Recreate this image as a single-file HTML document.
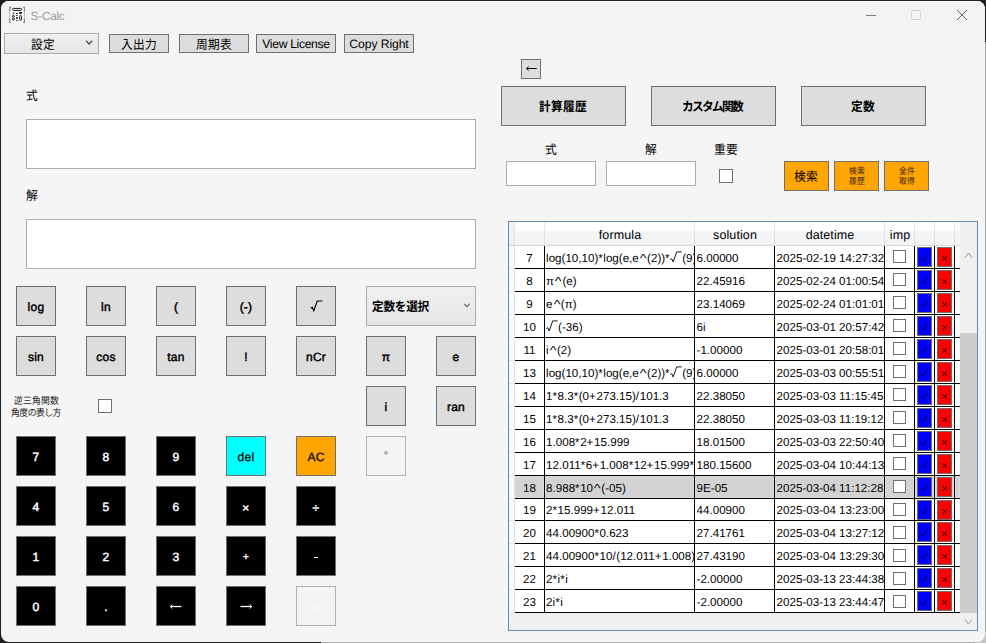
<!DOCTYPE html><html><head><meta charset="utf-8"><title>S-Calc</title><style>
*{box-sizing:border-box}
html,body{margin:0;padding:0}
body{text-rendering:geometricPrecision;width:986px;height:643px;position:relative;overflow:hidden;background:#1f1f1f;font-family:"Liberation Sans",sans-serif;font-size:12px;color:#000}
.a{position:absolute}
.t{position:absolute;overflow:visible}
.t text{font-family:"Liberation Sans","Noto Sans CJK JP",sans-serif}
#win{position:absolute;left:1px;top:1px;width:984px;height:641px;background:#f5f5f5;border-radius:8px 8px 8px 8px;overflow:hidden}
#tb{position:absolute;left:0;top:0;width:984px;height:29px;background:#f3f3f3;border-top:1px solid #fbfbfb}
.b{position:absolute;background:#ddd;border:1px solid #707070;text-align:center;font-weight:bold;font-size:12px;white-space:nowrap}
.k{position:absolute;width:40px;height:40px;line-height:41px;background:#ddd;border:1px solid #707070;text-align:center;font-weight:normal;-webkit-text-stroke:.45px currentColor;letter-spacing:.25px;font-size:12px}
.k.bk{background:#000;color:#fff}
.k.dis{background:#f4f4f4;border-color:#adb2b5;color:#838383}
.tx{position:absolute;background:#fff;border:1px solid #abadb3}
.cb{position:absolute;background:#fff;border:1px solid #707070}
.or{position:absolute;background:#ffa500;border:1px solid #707070}
</style></head><body>
<div class="a" style="left:985px;top:42px;width:1px;height:601px;background:#a8a8a8"></div>
<div class="a" style="left:321px;top:642px;width:665px;height:1px;background:#ababab"></div>
<div class="a" style="left:975px;top:632px;width:11px;height:11px;background:#c4c4c4"></div>
<div id="win">
<div id="tb"></div>
</div>
<svg class="t" style="left:6px;top:4px" width="24" height="22" viewBox="0 0 24 22">
<rect x="5" y="2.7" width="12.6" height="16.6" fill="#fcfcfc"/>
<path d="M3.7 6v9.8M18.4 6v9.8" fill="none" stroke="#b4b8bd" stroke-width="1.1"/>
<path d="M5 3.4H3.7V7M3.7 15v3.5H5M17.1 3.4h1.3V7M18.4 15v3.5h-1.3" fill="none" stroke="#7c838b" stroke-width="1.1"/>
<rect x="6.5" y="4.4" width="9.1" height="2" rx=".9" fill="#fff" stroke="#0b0f14" stroke-width="1"/>
<g fill="#0b0f14"><path d="M6.1 9.8h2V8.1z"/><rect x="9.9" y="9" width="2.1" height=".85"/><rect x="13.2" y="8.05" width="2.7" height="1.75"/>
<rect x="9.9" y="11" width="2.1" height=".65"/><rect x="10.1" y="13" width="1.8" height="1.7"/><rect x="9.9" y="16.1" width="2.1" height=".7"/></g>
<g fill="none" stroke="#0b0f14" stroke-width=".95"><circle cx="7.4" cy="12.3" r=".95"/><circle cx="7.4" cy="15.1" r="1.1"/><rect x="13.7" y="11.5" width="1.8" height="4.8" rx=".8" fill="#fff"/></g>
</svg>
<div class="a" style="left:30.6px;top:9px;font-size:11.8px;line-height:14px;color:#9a9a9a;letter-spacing:-0.25px">S-Calc</div>
<svg class="t" style="left:860px;top:5px" width="120" height="20" viewBox="0 0 120 20"><path d="M6 10.5h10" stroke="#7a7a7a" stroke-width="1" fill="none"/><rect x="51.5" y="5.5" width="9" height="9" rx="1" fill="none" stroke="#d0d0d0" stroke-width="1"/><path d="M97 5l10 10M107 5l-10 10" stroke="#666" stroke-width="1" fill="none"/></svg>
<div class="a" style="left:4px;top:33px;width:95px;height:21px;border:1px solid #acacac;background:linear-gradient(#f0f0f0,#e5e5e5)"></div>
<svg class="t" style="left:31.00px;top:37.80px" width="25.00" height="14.98" preserveAspectRatio="none" viewBox="0 0 2083 1200"><text x="0" y="880" font-size="1000" fill="#000">設定</text></svg>
<svg class="t" style="left:84px;top:39px" width="10" height="8" viewBox="0 0 10 8"><path d="M2 1.8l3.1 3.2 3.1-3.2" fill="none" stroke="#505050" stroke-width="1.3"/></svg>
<div class="b" style="left:109px;top:34px;width:60px;height:19px"></div>
<svg class="t" style="left:121.00px;top:37.80px" width="37.00" height="14.98" preserveAspectRatio="none" viewBox="0 0 3083 1200"><text x="0" y="880" font-size="1000" fill="#000">入出力</text></svg>
<div class="b" style="left:179px;top:34px;width:70px;height:19px"></div>
<svg class="t" style="left:196.00px;top:37.80px" width="37.00" height="14.98" preserveAspectRatio="none" viewBox="0 0 3083 1200"><text x="0" y="880" font-size="1000" fill="#000">周期表</text></svg>
<div class="b" style="left:256px;top:34px;width:80px;height:19px;font-weight:normal;line-height:18px;font-size:12.2px;letter-spacing:-0.35px">View License</div>
<div class="b" style="left:344px;top:34px;width:70px;height:19px;font-weight:normal;line-height:18px;font-size:12.2px;letter-spacing:-0.1px">Copy Right</div>
<svg class="t" style="left:26.10px;top:88.60px" width="13.00" height="14.98" preserveAspectRatio="none" viewBox="0 0 1083 1200"><text x="0" y="880" font-size="1000" fill="#000">式</text></svg>
<svg class="t" style="left:26.10px;top:188.60px" width="13.00" height="14.98" preserveAspectRatio="none" viewBox="0 0 1083 1200"><text x="0" y="880" font-size="1000" fill="#000">解</text></svg>
<div class="tx" style="left:26px;top:119px;width:450px;height:50px"></div>
<div class="tx" style="left:26px;top:219px;width:450px;height:50px"></div>
<div class="k " style="left:16px;top:286px;">log</div>
<div class="k " style="left:86px;top:286px;">ln</div>
<div class="k " style="left:156px;top:286px;">(</div>
<div class="k " style="left:226px;top:286px;">(-)</div>
<div class="k " style="left:296px;top:286px;"><svg width="13" height="13" viewBox="0 0 13 13" style="vertical-align:-2px"><path d="M0.6 8.3l1.7-.9 1.5 3.4L7.2 1h5.3" fill="none" stroke="#000" stroke-width="1.15"/></svg></div>
<div class="k " style="left:16px;top:336px;">sin</div>
<div class="k " style="left:86px;top:336px;">cos</div>
<div class="k " style="left:156px;top:336px;">tan</div>
<div class="k " style="left:226px;top:336px;">!</div>
<div class="k " style="left:296px;top:336px;">nCr</div>
<div class="k " style="left:366px;top:336px;">&#960;</div>
<div class="k " style="left:436px;top:336px;">e</div>
<div class="k " style="left:366px;top:386px;">i</div>
<div class="k " style="left:436px;top:386px;">ran</div>
<div class="k bk" style="left:16px;top:436px;">7</div>
<div class="k bk" style="left:86px;top:436px;">8</div>
<div class="k bk" style="left:156px;top:436px;">9</div>
<div class="k " style="left:226px;top:436px;background:#00ffff;-webkit-text-stroke-width:.25px">del</div>
<div class="k " style="left:296px;top:436px;background:#ffa500;-webkit-text-stroke-width:.25px">AC</div>
<div class="k dis" style="left:366px;top:436px;-webkit-text-stroke-width:.2px;line-height:39px;font-size:11px">&#176;</div>
<div class="k bk" style="left:16px;top:486px;">4</div>
<div class="k bk" style="left:86px;top:486px;">5</div>
<div class="k bk" style="left:156px;top:486px;">6</div>
<div class="k bk" style="left:226px;top:486px;line-height:43px">&#215;</div>
<div class="k bk" style="left:296px;top:486px;line-height:43px">&#247;</div>
<div class="k bk" style="left:16px;top:536px;">1</div>
<div class="k bk" style="left:86px;top:536px;">2</div>
<div class="k bk" style="left:156px;top:536px;">3</div>
<div class="k bk" style="left:226px;top:536px;line-height:41px;font-size:10px">+</div>
<div class="k bk" style="left:296px;top:536px;line-height:41px"><span style="display:inline-block;width:4px;height:1.3px;background:#fff;vertical-align:3px"></span></div>
<div class="k bk" style="left:16px;top:586px;">0</div>
<div class="k bk" style="left:86px;top:586px;">.</div>
<div class="k bk" style="left:156px;top:586px;"></div>
<div class="k bk" style="left:226px;top:586px;"></div>
<svg class="t" style="left:169.4px;top:602px" width="14" height="9" viewBox="0 0 14 9"><path d="M1.2 4.5h11.3" fill="none" stroke="#fff" stroke-width="1.3"/><path d="M3.4 2.5L1.3 4.5l2.1 2" fill="none" stroke="#fff" stroke-width="1"/></svg>
<svg class="t" style="left:239.4px;top:602px" width="14" height="9" viewBox="0 0 14 9"><path d="M1.5 4.5h11.3" fill="none" stroke="#fff" stroke-width="1.3"/><path d="M10.6 2.5l2.1 2-2.1 2" fill="none" stroke="#fff" stroke-width="1"/></svg>
<div class="k dis" style="left:296px;top:586px;color:#fbfbfb;line-height:43px">=</div>
<div class="a" style="left:366px;top:286px;width:110px;height:40px;border:1px solid #acacac;background:linear-gradient(#f0f0f0,#e5e5e5)"></div>
<svg class="t" style="left:372.30px;top:299.80px" width="58.48" height="14.98" preserveAspectRatio="none" viewBox="0 0 4873 1200"><text x="0" y="880" font-size="1000" font-weight="bold" fill="#000" textLength="4800" lengthAdjust="spacing">定数を選択</text></svg>
<svg class="t" style="left:462px;top:302px" width="10" height="8" viewBox="0 0 10 8"><path d="M2.2 1.8l2.7 2.8 2.7-2.8" fill="none" stroke="#606060" stroke-width="1.1"/></svg>
<svg class="t" style="left:13.70px;top:395.50px" width="46.00" height="11.23" preserveAspectRatio="none" viewBox="0 0 5111 1200"><text x="0" y="880" font-size="1000" fill="#222">逆三角関数</text></svg>
<svg class="t" style="left:11.09px;top:407.50px" width="51.22" height="11.23" preserveAspectRatio="none" viewBox="0 0 5691 1200"><text x="0" y="880" font-size="1000" fill="#222" textLength="5620" lengthAdjust="spacing">角度の表し方</text></svg>
<div class="cb" style="left:98px;top:399px;width:14px;height:14px"></div>
<div class="b" style="left:521px;top:59px;width:20px;height:20px"></div>
<svg class="t" style="left:524px;top:63px" width="14" height="10" viewBox="0 0 14 10"><path d="M2.5 5.5h10.2M4.6 3.6l-2 1.9 2 1.9" fill="none" stroke="#000" stroke-width="1"/></svg>
<div class="b" style="left:501px;top:86px;width:125px;height:40px"></div>
<svg class="t" style="left:539.10px;top:99.80px" width="49.00" height="14.98" preserveAspectRatio="none" viewBox="0 0 4083 1200"><text x="0" y="880" font-size="1000" font-weight="bold" fill="#000">計算履歴</text></svg>
<div class="b" style="left:651px;top:86px;width:125px;height:40px"></div>
<svg class="t" style="left:682.14px;top:99.80px" width="62.92" height="14.98" preserveAspectRatio="none" viewBox="0 0 5243 1200"><text x="0" y="880" font-size="1000" font-weight="bold" fill="#000" textLength="5170" lengthAdjust="spacing">カスタム関数</text></svg>
<div class="b" style="left:801px;top:86px;width:125px;height:40px"></div>
<svg class="t" style="left:851.10px;top:99.80px" width="25.00" height="14.98" preserveAspectRatio="none" viewBox="0 0 2083 1200"><text x="0" y="880" font-size="1000" font-weight="bold" fill="#000">定数</text></svg>
<svg class="t" style="left:544.90px;top:142.60px" width="13.00" height="14.98" preserveAspectRatio="none" viewBox="0 0 1083 1200"><text x="0" y="880" font-size="1000" fill="#000">式</text></svg>
<svg class="t" style="left:645.20px;top:142.60px" width="13.00" height="14.98" preserveAspectRatio="none" viewBox="0 0 1083 1200"><text x="0" y="880" font-size="1000" fill="#000">解</text></svg>
<svg class="t" style="left:714.00px;top:142.60px" width="25.00" height="14.98" preserveAspectRatio="none" viewBox="0 0 2083 1200"><text x="0" y="880" font-size="1000" fill="#000">重要</text></svg>
<div class="tx" style="left:506px;top:161px;width:90px;height:25px"></div>
<div class="tx" style="left:606px;top:161px;width:90px;height:25px"></div>
<div class="cb" style="left:719px;top:169px;width:14px;height:14px"></div>
<div class="or" style="left:784px;top:161px;width:45px;height:30px"></div>
<div class="or" style="left:834px;top:161px;width:45px;height:30px"></div>
<div class="or" style="left:884px;top:161px;width:45px;height:30px"></div>
<svg class="t" style="left:793.60px;top:170.10px" width="25.00" height="14.98" preserveAspectRatio="none" viewBox="0 0 2083 1200"><text x="0" y="880" font-size="1000" fill="#000">検索</text></svg>
<svg class="t" style="left:848.50px;top:166.80px" width="17.00" height="9.98" preserveAspectRatio="none" viewBox="0 0 2125 1200"><text x="0" y="880" font-size="1000" fill="#3a2600">検索</text></svg>
<svg class="t" style="left:848.50px;top:176.80px" width="17.00" height="9.98" preserveAspectRatio="none" viewBox="0 0 2125 1200"><text x="0" y="880" font-size="1000" fill="#3a2600">履歴</text></svg>
<svg class="t" style="left:898.50px;top:166.80px" width="17.00" height="9.98" preserveAspectRatio="none" viewBox="0 0 2125 1200"><text x="0" y="880" font-size="1000" fill="#3a2600">全件</text></svg>
<svg class="t" style="left:898.50px;top:176.80px" width="17.00" height="9.98" preserveAspectRatio="none" viewBox="0 0 2125 1200"><text x="0" y="880" font-size="1000" fill="#3a2600">取得</text></svg>
<style>#dg{position:absolute;left:508px;top:221px;width:470px;height:410px;border:1px solid #688caf;background:#f0f0f0;overflow:hidden;font-size:12px}#dg div{position:absolute}.hd{top:0;height:24px;background:linear-gradient(#fff 0,#fff 37%,#f5f6f8 41%,#f1f2f4 100%);border-bottom:1px solid #d5d5d5;line-height:26px;text-align:center;font-size:12.5px;letter-spacing:.1px}.hs{top:0;width:1px;height:23px;background:linear-gradient(#ebebed,#d9dadd)}.c{height:22px;line-height:25px;white-space:nowrap;overflow:hidden;font-size:11.6px}.h{display:inline-block;font-style:normal;width:8.3px;text-align:center;transform:scaleX(1.25)}.s{font-style:normal;letter-spacing:.5px}.p{font-style:normal;letter-spacing:.7px}.vl{top:24px;width:1px;height:367px;background:#000}.hl{left:6px;width:445px;height:1px;background:#000}.bb{width:15px;height:20px;border:1px solid #6b6b78;background:#00f}.rb{width:15px;height:20px;border:1px solid #7a6b6b;background:#f00}.ck{width:13px;height:13px;border:1px solid #707070;background:#fff}</style>
<div id="dg">
<div style="left:6px;top:24px;width:445px;height:367px;background:#fff"></div>
<div style="left:6px;top:254px;width:29px;height:22px;background:#d3d3d3;border:1px solid #dddddd"></div>
<div style="left:36px;top:254px;width:149px;height:22px;background:#d3d3d3;border:1px solid #dddddd"></div>
<div style="left:186px;top:254px;width:79px;height:22px;background:#d3d3d3;border:1px solid #dddddd"></div>
<div style="left:266px;top:254px;width:109px;height:22px;background:#d3d3d3;border:1px solid #dddddd"></div>
<div style="left:376px;top:254px;width:29px;height:22px;background:#d3d3d3;border:1px solid #dddddd"></div>
<div style="left:406px;top:254px;width:19px;height:22px;background:#d3d3d3;border:1px solid #dddddd"></div>
<div style="left:426px;top:254px;width:19px;height:22px;background:#d3d3d3;border:1px solid #dddddd"></div>
<div style="left:446px;top:254px;width:5px;height:22px;background:#d3d3d3;border:1px solid #dddddd"></div>
<div style="left:0;top:24px;width:6px;height:367px;background:linear-gradient(90deg,#f4f4f4 0,#fcfcfc 35%,#fcfcfc 80%,#dedede 84%,#dedede 100%)"></div>
<div class="hd" style="left:0;width:6px;background:#f0f0f0;border-right:1px solid #e2e2e2"></div>
<div class="hd" style="left:6px;width:30px"></div>
<div class="hs" style="left:35px"></div>
<div class="hd" style="left:36px;width:150px">formula</div>
<div class="hs" style="left:185px"></div>
<div class="hd" style="left:186px;width:80px">solution</div>
<div class="hs" style="left:265px"></div>
<div class="hd" style="left:266px;width:110px">datetime</div>
<div class="hs" style="left:375px"></div>
<div class="hd" style="left:376px;width:30px">imp</div>
<div class="hs" style="left:405px"></div>
<div class="hd" style="left:406px;width:20px"></div>
<div class="hs" style="left:425px"></div>
<div class="hd" style="left:426px;width:20px"></div>
<div class="hs" style="left:445px"></div>
<div class="hd" style="left:446px;width:5px"></div>
<div class="vl" style="left:35px"></div>
<div class="vl" style="left:185px"></div>
<div class="vl" style="left:265px"></div>
<div class="vl" style="left:375px"></div>
<div class="vl" style="left:405px"></div>
<div class="vl" style="left:425px"></div>
<div class="vl" style="left:445px"></div>
<div class="hl" style="top:46px"></div>
<div style="left:0;top:46px;width:6px;height:1px;background:#e3e3e3"></div>
<div class="c" style="left:6px;top:24px;width:29px;text-align:center">7</div>
<div class="c" style="left:37.10000000000002px;top:24px;width:147.89999999999998px">log(10,10)<i class="s">*</i>log(e,e<i class="h">^</i>(2))<i class="s">*</i><svg width="12" height="12" viewBox="0 0 12 12" style="vertical-align:-1.2px"><path d="M0.3 8.5l1.5-.8 1.4 3.3L6.7 .9h5" fill="none" stroke="#000" stroke-width=".9"/></svg>(9)</div>
<div class="c" style="left:187.60000000000002px;top:24px;width:77.39999999999998px">6.00000</div>
<div class="c" style="left:267.6px;top:24px;width:107.39999999999998px">2025-02-19 14:27:32</div>
<div class="ck" style="left:384px;top:28px"></div>
<div class="bb" style="left:408px;top:25px"></div>
<div class="rb" style="left:428px;top:25px"></div>
<svg class="t" style="left:410px;top:31px" width="11" height="9" viewBox="0 0 11 9"><path d="M2.2 5.2l2.2 2.7 3.5-6.2" fill="none" stroke="#000" stroke-width="0.9"/></svg>
<svg class="t" style="left:431px;top:33px" width="9" height="7" viewBox="0 0 9 7"><path d="M2.2 1.2l5 4.6M7.2 1.2l-5 4.6" fill="none" stroke="#000" stroke-width="0.9"/></svg>
<div class="hl" style="top:69px"></div>
<div style="left:0;top:69px;width:6px;height:1px;background:#e3e3e3"></div>
<div class="c" style="left:6px;top:47px;width:29px;text-align:center">8</div>
<div class="c" style="left:37.10000000000002px;top:47px;width:147.89999999999998px">&#960;<i class="h">^</i>(e)</div>
<div class="c" style="left:187.60000000000002px;top:47px;width:77.39999999999998px">22.45916</div>
<div class="c" style="left:267.6px;top:47px;width:107.39999999999998px">2025-02-24 01:00:54</div>
<div class="ck" style="left:384px;top:51px"></div>
<div class="bb" style="left:408px;top:48px"></div>
<div class="rb" style="left:428px;top:48px"></div>
<svg class="t" style="left:410px;top:54px" width="11" height="9" viewBox="0 0 11 9"><path d="M2.2 5.2l2.2 2.7 3.5-6.2" fill="none" stroke="#000" stroke-width="0.9"/></svg>
<svg class="t" style="left:431px;top:56px" width="9" height="7" viewBox="0 0 9 7"><path d="M2.2 1.2l5 4.6M7.2 1.2l-5 4.6" fill="none" stroke="#000" stroke-width="0.9"/></svg>
<div class="hl" style="top:92px"></div>
<div style="left:0;top:92px;width:6px;height:1px;background:#e3e3e3"></div>
<div class="c" style="left:6px;top:70px;width:29px;text-align:center">9</div>
<div class="c" style="left:37.10000000000002px;top:70px;width:147.89999999999998px">e<i class="h">^</i>(&#960;)</div>
<div class="c" style="left:187.60000000000002px;top:70px;width:77.39999999999998px">23.14069</div>
<div class="c" style="left:267.6px;top:70px;width:107.39999999999998px">2025-02-24 01:01:01</div>
<div class="ck" style="left:384px;top:74px"></div>
<div class="bb" style="left:408px;top:71px"></div>
<div class="rb" style="left:428px;top:71px"></div>
<svg class="t" style="left:410px;top:77px" width="11" height="9" viewBox="0 0 11 9"><path d="M2.2 5.2l2.2 2.7 3.5-6.2" fill="none" stroke="#000" stroke-width="0.9"/></svg>
<svg class="t" style="left:431px;top:79px" width="9" height="7" viewBox="0 0 9 7"><path d="M2.2 1.2l5 4.6M7.2 1.2l-5 4.6" fill="none" stroke="#000" stroke-width="0.9"/></svg>
<div class="hl" style="top:115px"></div>
<div style="left:0;top:115px;width:6px;height:1px;background:#e3e3e3"></div>
<div class="c" style="left:6px;top:93px;width:29px;text-align:center">10</div>
<div class="c" style="left:37.10000000000002px;top:93px;width:147.89999999999998px"><svg width="12" height="12" viewBox="0 0 12 12" style="vertical-align:-1.2px"><path d="M0.3 8.5l1.5-.8 1.4 3.3L6.7 .9h5" fill="none" stroke="#000" stroke-width=".9"/></svg>(-36)</div>
<div class="c" style="left:187.60000000000002px;top:93px;width:77.39999999999998px">6i</div>
<div class="c" style="left:267.6px;top:93px;width:107.39999999999998px">2025-03-01 20:57:42</div>
<div class="ck" style="left:384px;top:97px"></div>
<div class="bb" style="left:408px;top:94px"></div>
<div class="rb" style="left:428px;top:94px"></div>
<svg class="t" style="left:410px;top:100px" width="11" height="9" viewBox="0 0 11 9"><path d="M2.2 5.2l2.2 2.7 3.5-6.2" fill="none" stroke="#000" stroke-width="0.9"/></svg>
<svg class="t" style="left:431px;top:102px" width="9" height="7" viewBox="0 0 9 7"><path d="M2.2 1.2l5 4.6M7.2 1.2l-5 4.6" fill="none" stroke="#000" stroke-width="0.9"/></svg>
<div class="hl" style="top:138px"></div>
<div style="left:0;top:138px;width:6px;height:1px;background:#e3e3e3"></div>
<div class="c" style="left:6px;top:116px;width:29px;text-align:center">11</div>
<div class="c" style="left:37.10000000000002px;top:116px;width:147.89999999999998px">i<i class="h">^</i>(2)</div>
<div class="c" style="left:187.60000000000002px;top:116px;width:77.39999999999998px">-1.00000</div>
<div class="c" style="left:267.6px;top:116px;width:107.39999999999998px">2025-03-01 20:58:01</div>
<div class="ck" style="left:384px;top:120px"></div>
<div class="bb" style="left:408px;top:117px"></div>
<div class="rb" style="left:428px;top:117px"></div>
<svg class="t" style="left:410px;top:123px" width="11" height="9" viewBox="0 0 11 9"><path d="M2.2 5.2l2.2 2.7 3.5-6.2" fill="none" stroke="#000" stroke-width="0.9"/></svg>
<svg class="t" style="left:431px;top:125px" width="9" height="7" viewBox="0 0 9 7"><path d="M2.2 1.2l5 4.6M7.2 1.2l-5 4.6" fill="none" stroke="#000" stroke-width="0.9"/></svg>
<div class="hl" style="top:161px"></div>
<div style="left:0;top:161px;width:6px;height:1px;background:#e3e3e3"></div>
<div class="c" style="left:6px;top:139px;width:29px;text-align:center">13</div>
<div class="c" style="left:37.10000000000002px;top:139px;width:147.89999999999998px">log(10,10)<i class="s">*</i>log(e,e<i class="h">^</i>(2))<i class="s">*</i><svg width="12" height="12" viewBox="0 0 12 12" style="vertical-align:-1.2px"><path d="M0.3 8.5l1.5-.8 1.4 3.3L6.7 .9h5" fill="none" stroke="#000" stroke-width=".9"/></svg>(9)</div>
<div class="c" style="left:187.60000000000002px;top:139px;width:77.39999999999998px">6.00000</div>
<div class="c" style="left:267.6px;top:139px;width:107.39999999999998px">2025-03-03 00:55:51</div>
<div class="ck" style="left:384px;top:143px"></div>
<div class="bb" style="left:408px;top:140px"></div>
<div class="rb" style="left:428px;top:140px"></div>
<svg class="t" style="left:410px;top:146px" width="11" height="9" viewBox="0 0 11 9"><path d="M2.2 5.2l2.2 2.7 3.5-6.2" fill="none" stroke="#000" stroke-width="0.9"/></svg>
<svg class="t" style="left:431px;top:148px" width="9" height="7" viewBox="0 0 9 7"><path d="M2.2 1.2l5 4.6M7.2 1.2l-5 4.6" fill="none" stroke="#000" stroke-width="0.9"/></svg>
<div class="hl" style="top:184px"></div>
<div style="left:0;top:184px;width:6px;height:1px;background:#e3e3e3"></div>
<div class="c" style="left:6px;top:162px;width:29px;text-align:center">14</div>
<div class="c" style="left:37.10000000000002px;top:162px;width:147.89999999999998px">1<i class="s">*</i>8.3<i class="s">*</i>(0<i class="p">+</i>273.15)<i class="p">/</i>101.3</div>
<div class="c" style="left:187.60000000000002px;top:162px;width:77.39999999999998px">22.38050</div>
<div class="c" style="left:267.6px;top:162px;width:107.39999999999998px">2025-03-03 11:15:45</div>
<div class="ck" style="left:384px;top:166px"></div>
<div class="bb" style="left:408px;top:163px"></div>
<div class="rb" style="left:428px;top:163px"></div>
<svg class="t" style="left:410px;top:169px" width="11" height="9" viewBox="0 0 11 9"><path d="M2.2 5.2l2.2 2.7 3.5-6.2" fill="none" stroke="#000" stroke-width="0.9"/></svg>
<svg class="t" style="left:431px;top:171px" width="9" height="7" viewBox="0 0 9 7"><path d="M2.2 1.2l5 4.6M7.2 1.2l-5 4.6" fill="none" stroke="#000" stroke-width="0.9"/></svg>
<div class="hl" style="top:207px"></div>
<div style="left:0;top:207px;width:6px;height:1px;background:#e3e3e3"></div>
<div class="c" style="left:6px;top:185px;width:29px;text-align:center">15</div>
<div class="c" style="left:37.10000000000002px;top:185px;width:147.89999999999998px">1<i class="s">*</i>8.3<i class="s">*</i>(0<i class="p">+</i>273.15)<i class="p">/</i>101.3</div>
<div class="c" style="left:187.60000000000002px;top:185px;width:77.39999999999998px">22.38050</div>
<div class="c" style="left:267.6px;top:185px;width:107.39999999999998px">2025-03-03 11:19:12</div>
<div class="ck" style="left:384px;top:189px"></div>
<div class="bb" style="left:408px;top:186px"></div>
<div class="rb" style="left:428px;top:186px"></div>
<svg class="t" style="left:410px;top:192px" width="11" height="9" viewBox="0 0 11 9"><path d="M2.2 5.2l2.2 2.7 3.5-6.2" fill="none" stroke="#000" stroke-width="0.9"/></svg>
<svg class="t" style="left:431px;top:194px" width="9" height="7" viewBox="0 0 9 7"><path d="M2.2 1.2l5 4.6M7.2 1.2l-5 4.6" fill="none" stroke="#000" stroke-width="0.9"/></svg>
<div class="hl" style="top:230px"></div>
<div style="left:0;top:230px;width:6px;height:1px;background:#e3e3e3"></div>
<div class="c" style="left:6px;top:208px;width:29px;text-align:center">16</div>
<div class="c" style="left:37.10000000000002px;top:208px;width:147.89999999999998px">1.008<i class="s">*</i>2<i class="p">+</i>15.999</div>
<div class="c" style="left:187.60000000000002px;top:208px;width:77.39999999999998px">18.01500</div>
<div class="c" style="left:267.6px;top:208px;width:107.39999999999998px">2025-03-03 22:50:40</div>
<div class="ck" style="left:384px;top:212px"></div>
<div class="bb" style="left:408px;top:209px"></div>
<div class="rb" style="left:428px;top:209px"></div>
<svg class="t" style="left:410px;top:215px" width="11" height="9" viewBox="0 0 11 9"><path d="M2.2 5.2l2.2 2.7 3.5-6.2" fill="none" stroke="#000" stroke-width="0.9"/></svg>
<svg class="t" style="left:431px;top:217px" width="9" height="7" viewBox="0 0 9 7"><path d="M2.2 1.2l5 4.6M7.2 1.2l-5 4.6" fill="none" stroke="#000" stroke-width="0.9"/></svg>
<div class="hl" style="top:253px"></div>
<div style="left:0;top:253px;width:6px;height:1px;background:#e3e3e3"></div>
<div class="c" style="left:6px;top:231px;width:29px;text-align:center">17</div>
<div class="c" style="left:37.10000000000002px;top:231px;width:147.89999999999998px">12.011<i class="s">*</i>6<i class="p">+</i>1.008<i class="s">*</i>12<i class="p">+</i>15.999<i class="s">*</i>2</div>
<div class="c" style="left:187.60000000000002px;top:231px;width:77.39999999999998px">180.15600</div>
<div class="c" style="left:267.6px;top:231px;width:107.39999999999998px">2025-03-04 10:44:13</div>
<div class="ck" style="left:384px;top:235px"></div>
<div class="bb" style="left:408px;top:232px"></div>
<div class="rb" style="left:428px;top:232px"></div>
<svg class="t" style="left:410px;top:238px" width="11" height="9" viewBox="0 0 11 9"><path d="M2.2 5.2l2.2 2.7 3.5-6.2" fill="none" stroke="#000" stroke-width="0.9"/></svg>
<svg class="t" style="left:431px;top:240px" width="9" height="7" viewBox="0 0 9 7"><path d="M2.2 1.2l5 4.6M7.2 1.2l-5 4.6" fill="none" stroke="#000" stroke-width="0.9"/></svg>
<div class="hl" style="top:276px"></div>
<div style="left:0;top:276px;width:6px;height:1px;background:#e3e3e3"></div>
<div class="c" style="left:6px;top:254px;width:29px;text-align:center">18</div>
<div class="c" style="left:37.10000000000002px;top:254px;width:147.89999999999998px">8.988<i class="s">*</i>10<i class="h">^</i>(-05)</div>
<div class="c" style="left:187.60000000000002px;top:254px;width:77.39999999999998px">9E-05</div>
<div class="c" style="left:267.6px;top:254px;width:107.39999999999998px">2025-03-04 11:12:28</div>
<div class="ck" style="left:384px;top:258px"></div>
<div class="bb" style="left:408px;top:255px"></div>
<div class="rb" style="left:428px;top:255px"></div>
<svg class="t" style="left:410px;top:261px" width="11" height="9" viewBox="0 0 11 9"><path d="M2.2 5.2l2.2 2.7 3.5-6.2" fill="none" stroke="#000" stroke-width="0.9"/></svg>
<svg class="t" style="left:431px;top:263px" width="9" height="7" viewBox="0 0 9 7"><path d="M2.2 1.2l5 4.6M7.2 1.2l-5 4.6" fill="none" stroke="#000" stroke-width="0.9"/></svg>
<div class="hl" style="top:298px"></div>
<div style="left:0;top:298px;width:6px;height:1px;background:#e3e3e3"></div>
<div class="c" style="left:6px;top:276px;width:29px;text-align:center">19</div>
<div class="c" style="left:37.10000000000002px;top:276px;width:147.89999999999998px">2<i class="s">*</i>15.999<i class="p">+</i>12.011</div>
<div class="c" style="left:187.60000000000002px;top:276px;width:77.39999999999998px">44.00900</div>
<div class="c" style="left:267.6px;top:276px;width:107.39999999999998px">2025-03-04 13:23:00</div>
<div class="ck" style="left:384px;top:281px"></div>
<div class="bb" style="left:408px;top:278px"></div>
<div class="rb" style="left:428px;top:278px"></div>
<svg class="t" style="left:410px;top:284px" width="11" height="9" viewBox="0 0 11 9"><path d="M2.2 5.2l2.2 2.7 3.5-6.2" fill="none" stroke="#000" stroke-width="0.9"/></svg>
<svg class="t" style="left:431px;top:286px" width="9" height="7" viewBox="0 0 9 7"><path d="M2.2 1.2l5 4.6M7.2 1.2l-5 4.6" fill="none" stroke="#000" stroke-width="0.9"/></svg>
<div class="hl" style="top:321px"></div>
<div style="left:0;top:321px;width:6px;height:1px;background:#e3e3e3"></div>
<div class="c" style="left:6px;top:299px;width:29px;text-align:center">20</div>
<div class="c" style="left:37.10000000000002px;top:299px;width:147.89999999999998px">44.00900<i class="s">*</i>0.623</div>
<div class="c" style="left:187.60000000000002px;top:299px;width:77.39999999999998px">27.41761</div>
<div class="c" style="left:267.6px;top:299px;width:107.39999999999998px">2025-03-04 13:27:12</div>
<div class="ck" style="left:384px;top:304px"></div>
<div class="bb" style="left:408px;top:300px"></div>
<div class="rb" style="left:428px;top:300px"></div>
<svg class="t" style="left:410px;top:306px" width="11" height="9" viewBox="0 0 11 9"><path d="M2.2 5.2l2.2 2.7 3.5-6.2" fill="none" stroke="#000" stroke-width="0.9"/></svg>
<svg class="t" style="left:431px;top:308px" width="9" height="7" viewBox="0 0 9 7"><path d="M2.2 1.2l5 4.6M7.2 1.2l-5 4.6" fill="none" stroke="#000" stroke-width="0.9"/></svg>
<div class="hl" style="top:344px"></div>
<div style="left:0;top:344px;width:6px;height:1px;background:#e3e3e3"></div>
<div class="c" style="left:6px;top:322px;width:29px;text-align:center">21</div>
<div class="c" style="left:37.10000000000002px;top:322px;width:147.89999999999998px">44.00900<i class="s">*</i>10<i class="p">/</i>(12.011<i class="p">+</i>1.008)</div>
<div class="c" style="left:187.60000000000002px;top:322px;width:77.39999999999998px">27.43190</div>
<div class="c" style="left:267.6px;top:322px;width:107.39999999999998px">2025-03-04 13:29:30</div>
<div class="ck" style="left:384px;top:327px"></div>
<div class="bb" style="left:408px;top:323px"></div>
<div class="rb" style="left:428px;top:323px"></div>
<svg class="t" style="left:410px;top:329px" width="11" height="9" viewBox="0 0 11 9"><path d="M2.2 5.2l2.2 2.7 3.5-6.2" fill="none" stroke="#000" stroke-width="0.9"/></svg>
<svg class="t" style="left:431px;top:331px" width="9" height="7" viewBox="0 0 9 7"><path d="M2.2 1.2l5 4.6M7.2 1.2l-5 4.6" fill="none" stroke="#000" stroke-width="0.9"/></svg>
<div class="hl" style="top:367px"></div>
<div style="left:0;top:367px;width:6px;height:1px;background:#e3e3e3"></div>
<div class="c" style="left:6px;top:345px;width:29px;text-align:center">22</div>
<div class="c" style="left:37.10000000000002px;top:345px;width:147.89999999999998px">2<i class="s">*</i>i<i class="s">*</i>i</div>
<div class="c" style="left:187.60000000000002px;top:345px;width:77.39999999999998px">-2.00000</div>
<div class="c" style="left:267.6px;top:345px;width:107.39999999999998px">2025-03-13 23:44:38</div>
<div class="ck" style="left:384px;top:350px"></div>
<div class="bb" style="left:408px;top:346px"></div>
<div class="rb" style="left:428px;top:346px"></div>
<svg class="t" style="left:410px;top:352px" width="11" height="9" viewBox="0 0 11 9"><path d="M2.2 5.2l2.2 2.7 3.5-6.2" fill="none" stroke="#000" stroke-width="0.9"/></svg>
<svg class="t" style="left:431px;top:354px" width="9" height="7" viewBox="0 0 9 7"><path d="M2.2 1.2l5 4.6M7.2 1.2l-5 4.6" fill="none" stroke="#000" stroke-width="0.9"/></svg>
<div class="hl" style="top:390px"></div>
<div style="left:0;top:390px;width:6px;height:1px;background:#e3e3e3"></div>
<div class="c" style="left:6px;top:368px;width:29px;text-align:center">23</div>
<div class="c" style="left:37.10000000000002px;top:368px;width:147.89999999999998px">2i<i class="s">*</i>i</div>
<div class="c" style="left:187.60000000000002px;top:368px;width:77.39999999999998px">-2.00000</div>
<div class="c" style="left:267.6px;top:368px;width:107.39999999999998px">2025-03-13 23:44:47</div>
<div class="ck" style="left:384px;top:373px"></div>
<div class="bb" style="left:408px;top:369px"></div>
<div class="rb" style="left:428px;top:369px"></div>
<svg class="t" style="left:410px;top:375px" width="11" height="9" viewBox="0 0 11 9"><path d="M2.2 5.2l2.2 2.7 3.5-6.2" fill="none" stroke="#000" stroke-width="0.9"/></svg>
<svg class="t" style="left:431px;top:377px" width="9" height="7" viewBox="0 0 9 7"><path d="M2.2 1.2l5 4.6M7.2 1.2l-5 4.6" fill="none" stroke="#000" stroke-width="0.9"/></svg>
<div style="left:451px;top:0;width:17px;height:24px;background:#f0f0f0"></div>
<div style="left:451px;top:24px;width:17px;height:384px;background:#f0f0f0"></div>
<div style="left:451px;top:111px;width:17px;height:280px;background:#cdcdcd"></div>
<svg class="t" style="left:455px;top:28px" width="10" height="10" viewBox="0 0 10 10"><path d="M1 7.6l3.5-4.6 3.5 4.6" fill="none" stroke="#9a9a9a" stroke-width="1"/></svg>
<svg class="t" style="left:455px;top:395px" width="10" height="10" viewBox="0 0 10 10"><path d="M1 2.6l3.5 4.6 3.5-4.6" fill="none" stroke="#9a9a9a" stroke-width="1"/></svg>
</div>
</body></html>
